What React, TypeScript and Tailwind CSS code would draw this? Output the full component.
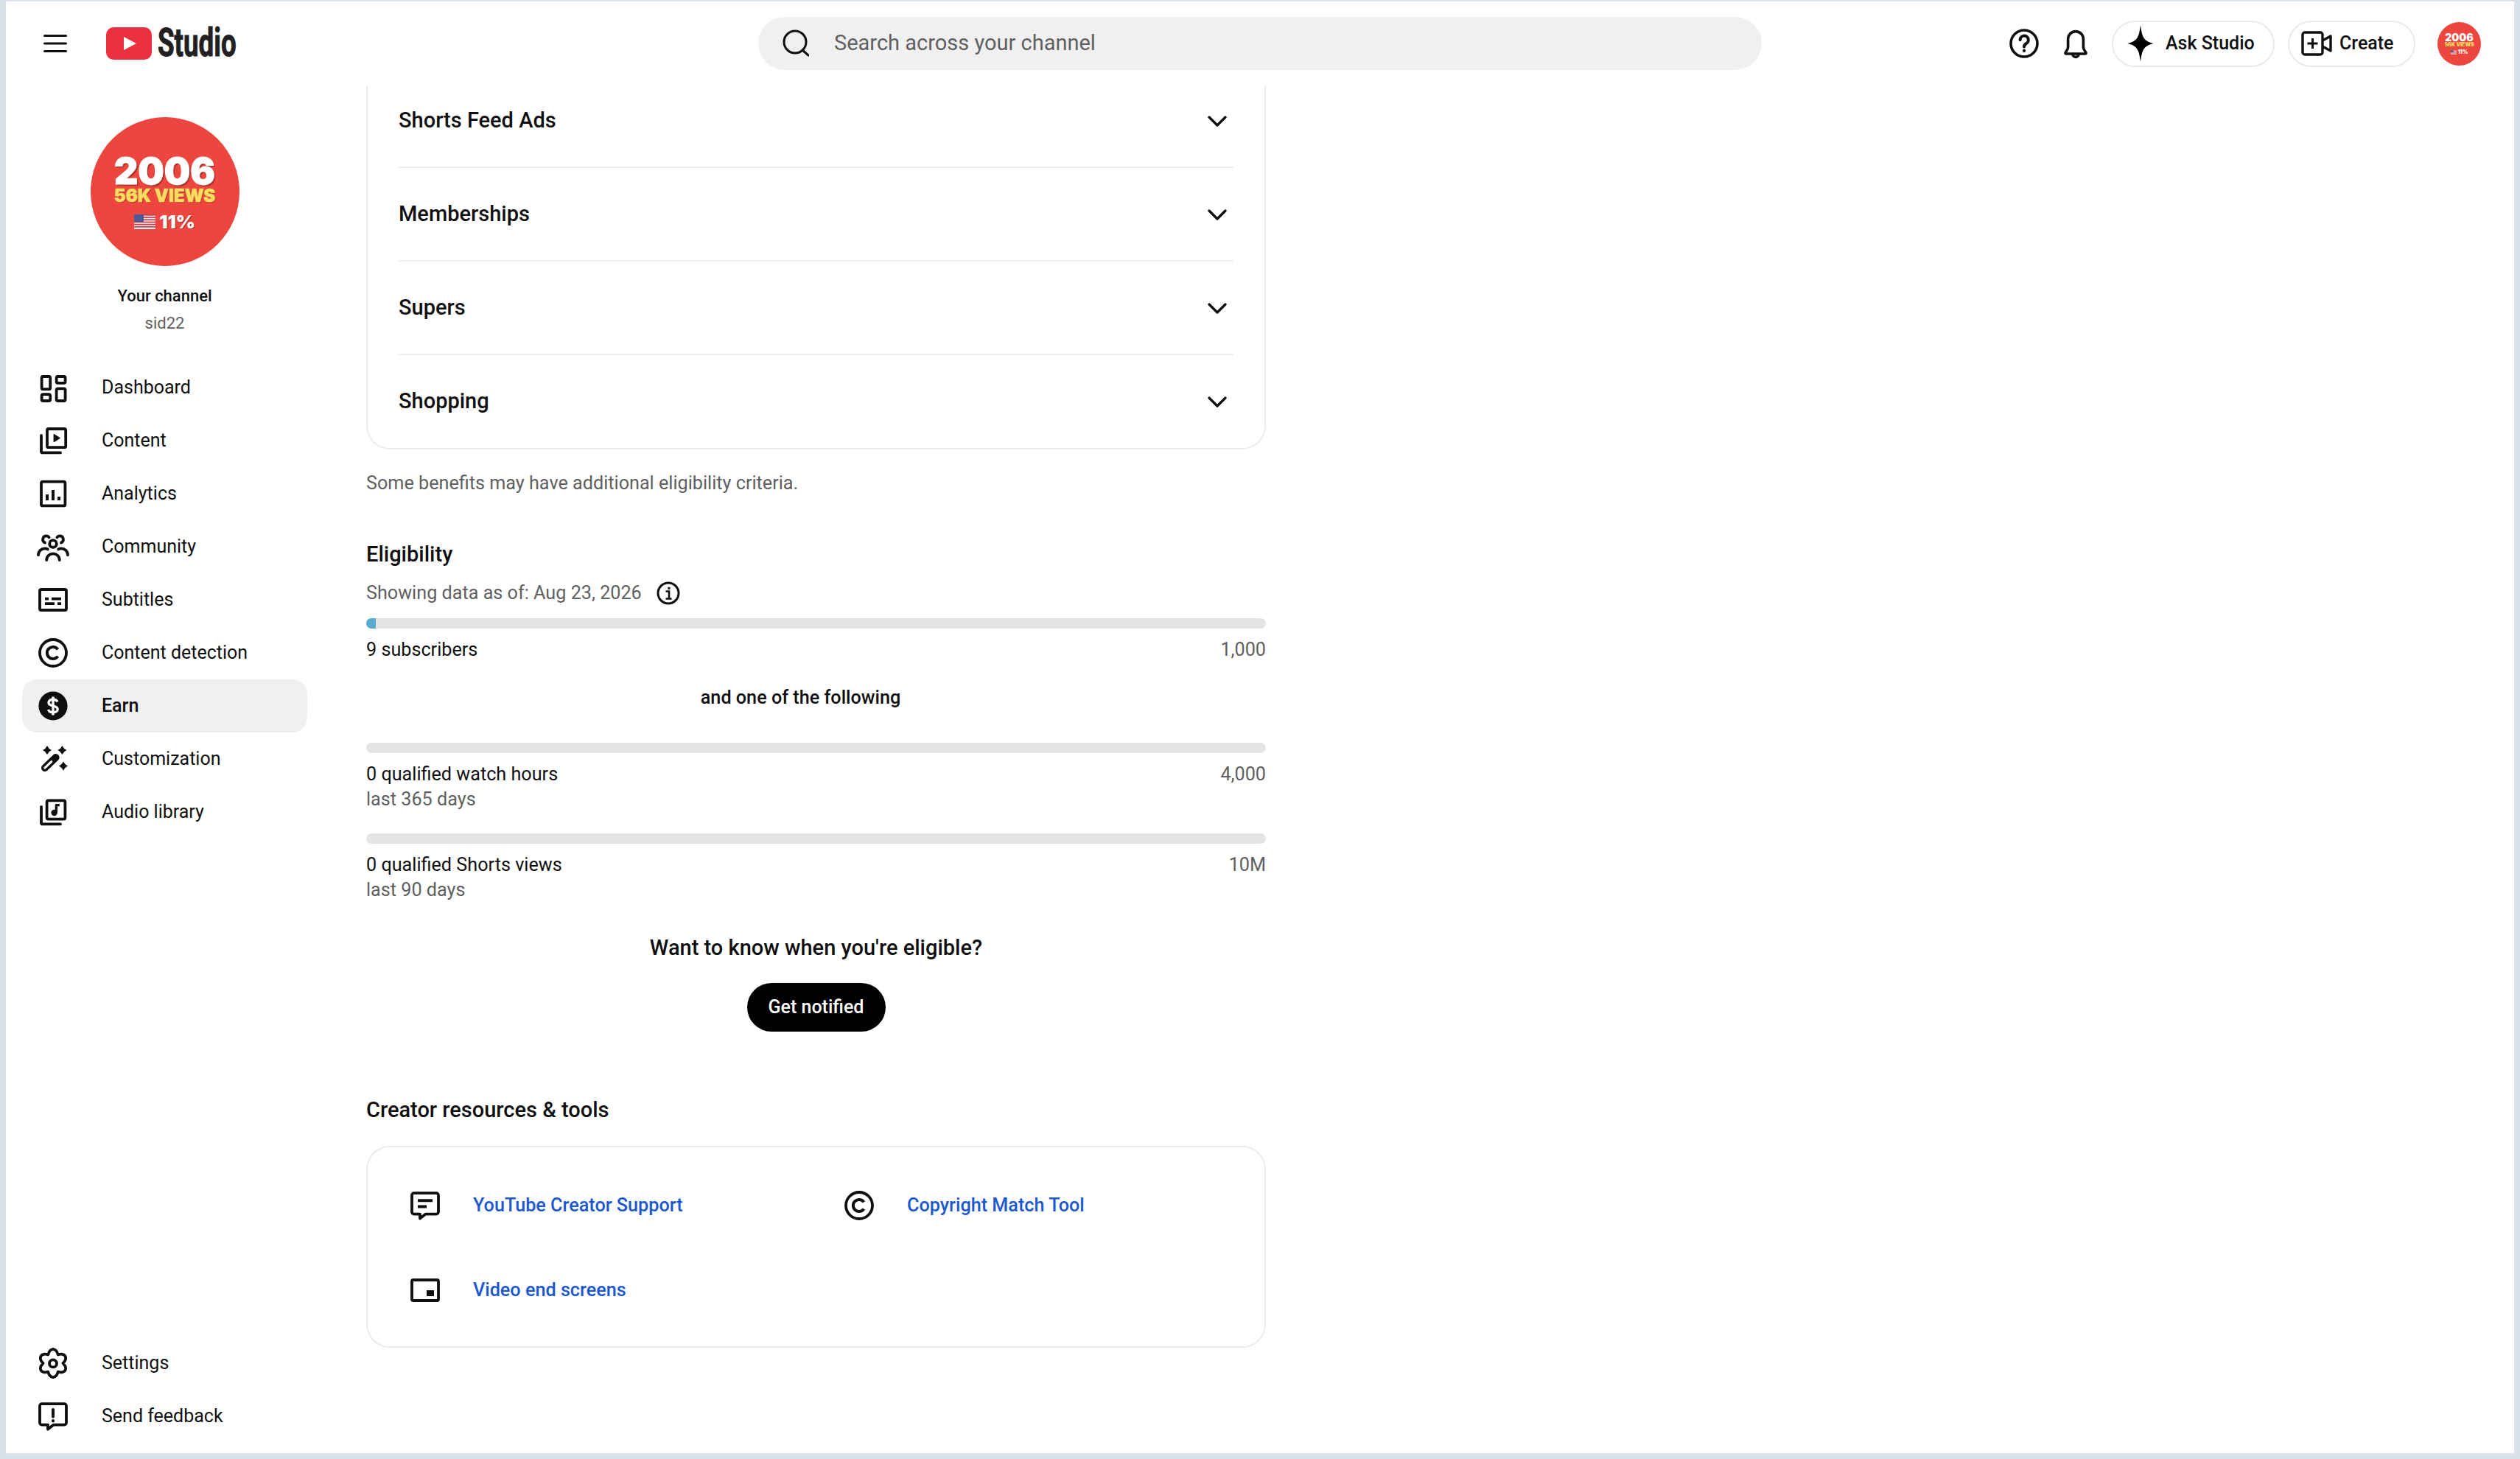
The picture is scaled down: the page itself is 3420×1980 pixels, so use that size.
import React from "react";

const font = "font-['Roboto',sans-serif]";

function Ico({ children, cls = "w-12 h-12", sw = 1.9 }: { children: React.ReactNode; cls?: string; sw?: number }) {
  return (
    <svg viewBox="0 0 24 24" className={`${cls} shrink-0`} fill="none" stroke="#0f0f0f" strokeWidth={sw} strokeLinecap="round" strokeLinejoin="round">
      {children}
    </svg>
  );
}

const spark = (x: number, y: number, r: number) =>
  `M${x} ${y - r}Q${x + r * 0.3} ${y - r * 0.3} ${x + r} ${y}Q${x + r * 0.3} ${y + r * 0.3} ${x} ${y + r}Q${x - r * 0.3} ${y + r * 0.3} ${x - r} ${y}Q${x - r * 0.3} ${y - r * 0.3} ${x} ${y - r}Z`;

const gear = (() => {
  const pt = (r: number, deg: number) => {
    const a = (deg * Math.PI) / 180;
    return `${(12 + r * Math.cos(a)).toFixed(2)} ${(12 + r * Math.sin(a)).toFixed(2)}`;
  };
  let d = `M${pt(6.7, -120)}`;
  for (let i = 0; i < 6; i++) {
    const lobe = -90 + 60 * i;
    d += `C${pt(7.6, lobe - 24)} ${pt(9.6, lobe - 15)} ${pt(9.6, lobe)}C${pt(9.6, lobe + 15)} ${pt(7.6, lobe + 24)} ${pt(6.7, lobe + 30)}`;
  }
  return d + "Z";
})();

const icons: Record<string, React.ReactNode> = {
  Dashboard: (
    <>
      <rect x="4.3" y="4.5" width="5.8" height="8.6" rx="1" />
      <rect x="4.3" y="16.6" width="5.8" height="4.4" rx="1" />
      <rect x="14.3" y="4.5" width="6" height="4.4" rx="1" />
      <rect x="14.3" y="12.7" width="6" height="8.3" rx="1" />
    </>
  ),
  Content: (
    <>
      <rect x="8" y="4" width="12.6" height="12.6" rx="1" />
      <path d="M4 8.5V19.2a1 1 0 0 0 1 1H17" />
      <path d="M12.6 7.8v5l4-2.5z" fill="#0f0f0f" strokeWidth="0.6" />
    </>
  ),
  Analytics: (
    <>
      <rect x="4" y="3.8" width="16.2" height="16.4" rx="1" />
      <path d="M8 12.5v4M12 9.5v7M16 14v2.5" strokeWidth="2" strokeLinecap="butt" />
    </>
  ),
  Community: (
    <>
      <circle cx="12" cy="10" r="2.4" />
      <path d="M7.6 21c0-2.5 2-4.3 4.4-4.3s4.4 1.8 4.4 4.3" />
      <path d="M9.3 5.6C8.8 5 8.2 4.7 7.5 4.7a2.4 2.4 0 0 0-1 4.6" />
      <path d="M14.7 5.6c.5-.6 1.1-.9 1.8-.9a2.4 2.4 0 0 1 1 4.6" />
      <path d="M2 17.6c0-2.6 2-4.4 4.4-4.4.8 0 1.5.2 2 .5" />
      <path d="M22 17.6c0-2.6-2-4.4-4.4-4.4-.8 0-1.5.2-2 .5" />
    </>
  ),
  Subtitles: (
    <>
      <rect x="3" y="5" width="18" height="14" rx="1" />
      <path d="M6.5 11.3h2.5M11 11.3h6.5M6.5 14.6h6.5M15 14.6h2.5" strokeLinecap="butt" />
    </>
  ),
  "Content detection": (
    <>
      <circle cx="12" cy="12" r="9" />
      <path d="M15.2 9.7a4 4 0 1 0 0 4.6" strokeWidth="2" strokeLinecap="butt" />
    </>
  ),
  Earn: (
    <>
      <circle cx="12" cy="12" r="9.8" fill="#0f0f0f" stroke="none" />
      <path d="M15 9.2c-.4-1-1.5-1.6-3-1.6-1.7 0-3 .8-3 2.2 0 3 6.1 1.5 6.1 4.4 0 1.4-1.4 2.2-3.1 2.2-1.6 0-2.8-.7-3.2-1.9M12 5.8v12.4" stroke="#fff" strokeWidth="1.7" strokeLinecap="butt" />
    </>
  ),
  Customization: (
    <>
      <path d="M6.5 18L13.8 11" strokeWidth="5" />
      <path d="M6.4 18.1L10.9 13.8" stroke="#fff" strokeWidth="1.5" />
      <path d={spark(8, 6, 3)} fill="#0f0f0f" stroke="none" />
      <path d={spark(18.2, 6, 3)} fill="#0f0f0f" stroke="none" />
      <path d={spark(19, 16.8, 3.2)} fill="#0f0f0f" stroke="none" />
    </>
  ),
  "Audio library": (
    <>
      <rect x="7.8" y="4.2" width="12.4" height="12.6" rx="1" />
      <path d="M4 8.5V19.2a1 1 0 0 0 1 1H17" />
      <circle cx="12.8" cy="12.5" r="2.1" fill="#0f0f0f" stroke="none" />
      <path d="M14.2 12.4V7.3h2.2" strokeWidth="1.7" strokeLinecap="butt" />
    </>
  ),
  Settings: (
    <>
      <path d={gear} />
      <circle cx="12" cy="12.2" r="2.5" />
    </>
  ),
  "Send feedback": (
    <>
      <path d="M4.4 3.6h15.2a1.4 1.4 0 0 1 1.4 1.4v11.4a1.4 1.4 0 0 1-1.4 1.4h-7.2l-3.9 3v-3H4.4A1.4 1.4 0 0 1 3 16.4V5A1.4 1.4 0 0 1 4.4 3.6z" />
      <path d="M12 7.5v4.8M12 15v.3" strokeWidth="2" />
    </>
  ),
};

function NavRow({ label, active }: { label: string; active?: boolean }) {
  return (
    <div className={`h-[72px] flex items-center gap-[42px] pl-[18px] rounded-[20px] ${active ? "bg-[#f0f0f0]" : ""}`}>
      <Ico>{icons[label]}</Ico>
      <span className={`text-[25px] leading-9 text-[#0f0f0f] ${active ? "font-medium" : ""}`}>{label}</span>
    </div>
  );
}

function Flag({ cls }: { cls: string }) {
  return (
    <svg viewBox="0 0 29 20" className={cls}>
      <rect width="29" height="20" fill="#f3eeee" />
      {[0, 3.2, 6.4, 9.6, 12.8, 16].map((y) => (
        <rect key={y} y={y} width="29" height="1.7" fill="#c9404c" />
      ))}
      <rect width="13" height="10" fill="#4a5a96" />
    </svg>
  );
}

function Avatar({ small }: { small?: boolean }) {
  if (small) {
    return (
      <div className="w-[59px] h-[59px] rounded-full bg-[#ec463e] flex flex-col items-center pt-[15px] font-['Inter',sans-serif] font-black shrink-0">
        <div className="text-[14px] leading-[12px] text-white">2006</div>
        <div className="text-[7px] leading-[8px] text-[#f9dd5e] whitespace-nowrap">56K VIEWS</div>
        <div className="flex items-center gap-[2px] text-[7px] leading-[12px] text-white">
          <Flag cls="w-[8px] h-[6px]" />
          11%
        </div>
      </div>
    );
  }
  return (
    <div className="w-[202px] h-[202px] rounded-full bg-[#ec463e] flex flex-col items-center pt-[53px] font-['Inter',sans-serif] font-black">
      <div className="text-[50px] leading-[40px] text-white [-webkit-text-stroke:1px_#fff] [text-shadow:2px_2px_0_#a8322c]">2006</div>
      <div className="text-[24px] leading-[28px] text-[#f9dd5e] whitespace-nowrap [-webkit-text-stroke:0.5px_#f9dd5e] [text-shadow:1px_1px_0_#a8322c]">56K VIEWS</div>
      <div className="flex items-center gap-[5px] text-[25px] leading-[42px] text-white [text-shadow:1px_1px_0_#a8322c]">
        <Flag cls="w-[29px] h-[20px]" />
        11%
      </div>
    </div>
  );
}

function Header() {
  return (
    <header className="h-[114px] shrink-0 flex items-center">
      <div className="w-[1021px] shrink-0 flex items-center">
        <svg viewBox="0 0 32 24" className="w-[32px] h-[24px] ml-[51px] shrink-0" stroke="#0f0f0f" strokeWidth="3" strokeLinecap="round">
          <path d="M1.5 1.5h29M1.5 12h29M1.5 22.5h29" />
        </svg>
        <svg viewBox="0 0 62 44" className="w-[62px] h-[44px] ml-[53px] shrink-0">
          <rect width="62" height="44" rx="10" fill="#ed3040" />
          <path d="M24 13l17 9-17 9z" fill="#fff" />
        </svg>
        <span className="ml-[8px] w-[106px] inline-block origin-left scale-x-[0.68] text-[54px] leading-[54px] font-bold text-[#212121] -mt-[2px] [-webkit-text-stroke:1px_#212121]">Studio</span>
      </div>
      <div className="w-[1362px] h-[72px] shrink-0 bg-[#f0f0f0] rounded-full flex items-center pl-[33px] gap-[34px]">
        <svg viewBox="0 0 36 38" className="w-[36px] h-[38px] shrink-0" fill="none" stroke="#0f0f0f" strokeWidth="3" strokeLinecap="round">
          <circle cx="17" cy="17" r="15" />
          <path d="M27 28l8 7" />
        </svg>
        <span className="text-[29px] text-[#606060]">Search across your channel</span>
      </div>
      <div className="flex-1 flex items-center justify-end pr-[45px]">
        <Ico cls="w-[48px] h-[48px]" sw={1.8}>
          <circle cx="12" cy="12" r="9" />
          <path d="M9.3 9.6a2.8 2.8 0 1 1 4.2 2.4c-.9.6-1.5 1.1-1.5 2.2M12 16.8v.2" strokeWidth="2" />
        </Ico>
        <div className="ml-[22px] mr-[1px]">
          <Ico cls="w-[48px] h-[48px]" sw={1.8}>
            <path d="M5 18.5c0-1 1.8-1.8 1.8-4V9a5.2 5.2 0 0 1 10.4 0v5.5c0 2.2 1.8 3 1.8 4 0 .4-.3.5-.6.5H5.6c-.3 0-.6-.1-.6-.5z" />
            <path d="M10 19.2a2 2 0 0 0 4 0" />
          </Ico>
        </div>
        <div className="ml-[24px] w-[221px] h-[63px] border-2 border-[#eaeaea] rounded-full flex items-center pl-[19px] gap-[16px]">
          <svg viewBox="0 0 36 50" className="w-[36px] h-[50px] shrink-0">
            <path d="M18 0C20 16 22 22 36 25 22 28 20 34 18 50 16 34 14 28 0 25 14 22 16 16 18 0Z" fill="#000" />
          </svg>
          <span className="text-[25px] font-medium text-[#0f0f0f]">Ask Studio</span>
        </div>
        <div className="ml-[18px] w-[173px] h-[63px] border-2 border-[#eaeaea] rounded-full flex items-center pl-[16px] gap-[10px]">
          <svg viewBox="0 0 42 34" className="w-[42px] h-[34px] shrink-0" fill="none" stroke="#0f0f0f" strokeWidth="3.4" strokeLinejoin="round">
            <rect x="2" y="2" width="27" height="30" rx="3" />
            <path d="M15.5 10v14M8.5 17h14" strokeWidth="3" />
            <path d="M29 13l11-6v20l-11-6" />
          </svg>
          <span className="text-[25px] font-medium text-[#0f0f0f]">Create</span>
        </div>
        <div className="ml-[30px]">
          <Avatar small />
        </div>
      </div>
    </header>
  );
}

function Sidebar() {
  const top = ["Dashboard", "Content", "Analytics", "Community", "Subtitles", "Content detection", "Earn", "Customization", "Audio library"];
  return (
    <aside className="w-[432px] shrink-0 flex flex-col pl-[22px] pr-[23px] pb-[14px]">
      <div className="flex flex-col items-center pt-[43px]">
        <Avatar />
        <div className="mt-[23px] text-[22px] leading-9 font-medium text-[#0f0f0f]">Your channel</div>
        <div className="mt-[1px] text-[22px] leading-9 text-[#606060]">sid22</div>
      </div>
      <nav className="mt-[33px] flex flex-col">
        {top.map((l) => (
          <NavRow key={l} label={l} active={l === "Earn"} />
        ))}
      </nav>
      <div className="mt-auto flex flex-col">
        <NavRow label="Settings" />
        <NavRow label="Send feedback" />
      </div>
    </aside>
  );
}

function Accordion() {
  const rows = [
    { t: "Shorts Feed Ads", h: "h-[112px]", pt: "pb-[14px]" },
    { t: "Memberships", h: "h-[127px]", pt: "" },
    { t: "Supers", h: "h-[127px]", pt: "" },
    { t: "Shopping", h: "h-[126px]", pt: "" },
  ];
  return (
    <div className="rounded-b-[32px] border-2 border-t-0 border-[#ececec] px-[42px]">
      {rows.map((r, i) => (
        <div key={r.t} className={`${r.h} ${r.pt} flex items-center justify-between ${i < 3 ? "border-b-2 border-[#f0f0f0]" : ""}`}>
          <span className="text-[29px] font-medium text-[#0f0f0f]">{r.t}</span>
          <div className="-mr-[2px]">
            <Ico sw={1.7}>
              <path d="M6.5 9.5l5.5 5.5 5.5-5.5" />
            </Ico>
          </div>
        </div>
      ))}
    </div>
  );
}

function Bar({ fill }: { fill?: boolean }) {
  return (
    <div className="h-[14px] rounded-full bg-[#e4e4e4] overflow-hidden">
      {fill && <div className="h-full w-[13px] bg-[#5aa9cf]" />}
    </div>
  );
}

function Metric({ label, goal, sub }: { label: string; goal: string; sub?: string }) {
  return (
    <div className="mt-[12px]">
      <div className="flex justify-between text-[25.2px] leading-[34px]">
        <span className="text-[#0f0f0f]">{label}</span>
        <span className="text-[#606060]">{goal}</span>
      </div>
      {sub && <div className="text-[25.2px] leading-[34px] text-[#606060]">{sub}</div>}
    </div>
  );
}

function Resource({ icon, label }: { icon: React.ReactNode; label: string }) {
  return (
    <div className="h-[115px] flex items-center gap-[41px]">
      <Ico>{icon}</Ico>
      <span className="text-[25.2px] font-medium text-[#1b57ce]">{label}</span>
    </div>
  );
}

function Main() {
  return (
    <main className="w-[1221px] ml-[57px] shrink-0 flex flex-col">
      <Accordion />
      <div className="mt-[28px] text-[25.2px] leading-9 text-[#606060]">Some benefits may have additional eligibility criteria.</div>
      <div className="mt-[56px] text-[29px] leading-[44px] font-medium text-[#0f0f0f]">Eligibility</div>
      <div className="mt-[13px] h-[36px] flex items-center text-[25.2px] text-[#606060]">
        <span>Showing data as of: Aug 23, 2026</span>
        <svg viewBox="0 0 32 32" className="w-[32px] h-[32px] ml-[20px] shrink-0" fill="none" stroke="#0f0f0f" strokeWidth="3">
          <circle cx="16" cy="16" r="14" />
          <path d="M12.5 13.5H17V23M12.5 23.5h8" strokeWidth="2.6" />
          <path d="M15.6 8h2.6v2.6h-2.6z" fill="#0f0f0f" strokeWidth="0.5" />
        </svg>
      </div>
      <div className="mt-[16px]">
        <Bar fill />
      </div>
      <Metric label="9 subscribers" goal="1,000" />
      <div className="mt-[30px] pr-[42px] text-center text-[25.2px] leading-9 font-medium text-[#0f0f0f]">and one of the following</div>
      <div className="mt-[43px]">
        <Bar />
      </div>
      <Metric label="0 qualified watch hours" goal="4,000" sub="last 365 days" />
      <div className="mt-[29px]">
        <Bar />
      </div>
      <Metric label="0 qualified Shorts views" goal="10M" sub="last 90 days" />
      <div className="mt-[41px] text-center text-[29px] leading-[40px] font-medium text-[#0f0f0f]">Want to know when you're eligible?</div>
      <div className="mt-[28px] flex justify-center">
        <div className="w-[188px] h-[66px] rounded-full bg-black flex items-center justify-center text-[25px] font-medium text-white">Get notified</div>
      </div>
      <div className="mt-[86px] text-[29px] leading-[40px] font-medium text-[#0f0f0f]">Creator resources & tools</div>
      <div className="mt-[29px] h-[274px] rounded-[32px] border-2 border-[#ececec] pl-[54px] pt-[21px] grid grid-cols-[589px_1fr] content-start">
        <Resource
          label="YouTube Creator Support"
          icon={
            <>
              <path d="M4.4 3.6h15.2a1.4 1.4 0 0 1 1.4 1.4v11.4a1.4 1.4 0 0 1-1.4 1.4h-7.2l-3.9 3v-3H4.4A1.4 1.4 0 0 1 3 16.4V5A1.4 1.4 0 0 1 4.4 3.6z" />
              <path d="M7 8.6h10M7 12.8h6" strokeWidth="2" strokeLinecap="butt" />
            </>
          }
        />
        <Resource label="Copyright Match Tool" icon={icons["Content detection"]} />
        <Resource
          label="Video end screens"
          icon={
            <>
              <rect x="3" y="5" width="18" height="14" rx="1" />
              <rect x="13" y="12" width="5" height="4" fill="#0f0f0f" stroke="none" />
            </>
          }
        />
      </div>
    </main>
  );
}

export default function App() {
  return (
    <div className={`w-[3420px] h-[1980px] bg-[#d9e2ea] pt-[2px] px-2 pb-2 overflow-hidden ${font}`}>
      <div className="h-full bg-white flex flex-col overflow-hidden">
        <Header />
        <div className="flex-1 flex min-h-0">
          <Sidebar />
          <Main />
        </div>
      </div>
    </div>
  );
}
